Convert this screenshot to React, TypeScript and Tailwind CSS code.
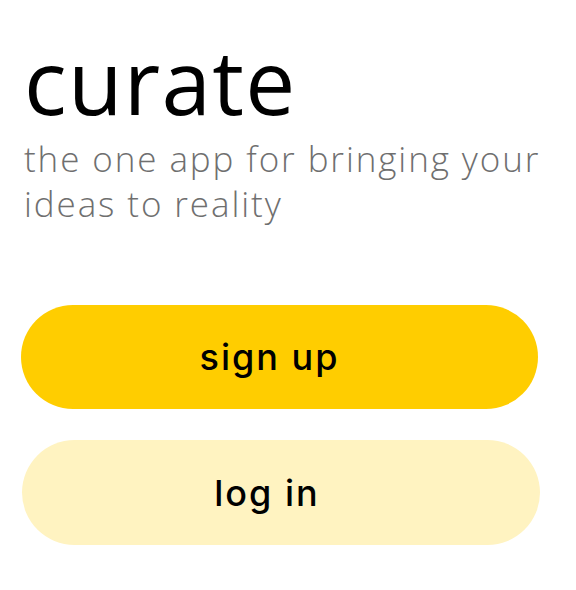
export default function App() {
  return (
    <div className="min-h-[590px] w-[576px] bg-white px-[21px] pt-[31px]">
      <div className="pl-[3px]" style={{ fontFamily: '"Open Sans", Lato, sans-serif' }}>
        <h1 className="text-[89px] font-normal leading-[100px] tracking-[1.3px] text-black">curate</h1>
        <p className="mt-[5px] w-[545px] text-[35px] font-light leading-[45px] tracking-[1.9px] text-[#6f6f6f]">
          the one app for bringing your ideas to reality
        </p>
      </div>
      <div className="mt-[79px] flex flex-col gap-[31px]" style={{ fontFamily: 'Inter, "Noto Sans", sans-serif' }}>
        <button className="h-[104px] w-[517px] rounded-full bg-[#ffcd00] pr-[20px] text-[36px] font-[450] tracking-[2px] text-black">
          sign up
        </button>
        <button className="ml-[1px] h-[105px] w-[518px] rounded-full bg-[#fff3c1] pr-[28px] text-[36px] font-[450] tracking-[2px] text-black">
          log in
        </button>
      </div>
    </div>
  )
}
